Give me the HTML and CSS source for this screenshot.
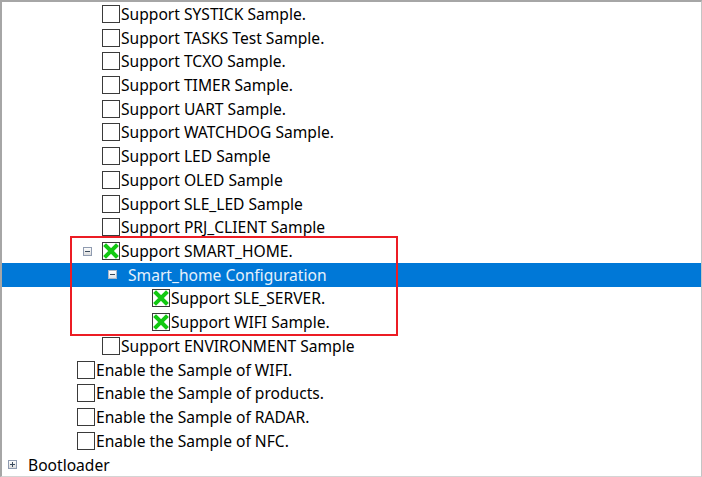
FILE: index.html
```html
<!DOCTYPE html>
<html>
<head>
<meta charset="utf-8">
<link rel="stylesheet" href="styles.css">
</head>
<body>
<div class="tree">
  <div class="row l3"><span class="exp"></span><span class="cb"></span><span class="txt">Support SYSTICK Sample.</span></div>
  <div class="row l3"><span class="exp"></span><span class="cb"></span><span class="txt">Support TASKS Test Sample.</span></div>
  <div class="row l3"><span class="exp"></span><span class="cb"></span><span class="txt">Support TCXO Sample.</span></div>
  <div class="row l3"><span class="exp"></span><span class="cb"></span><span class="txt">Support TIMER Sample.</span></div>
  <div class="row l3"><span class="exp"></span><span class="cb"></span><span class="txt">Support UART Sample.</span></div>
  <div class="row l3"><span class="exp"></span><span class="cb"></span><span class="txt">Support WATCHDOG Sample.</span></div>
  <div class="row l3"><span class="exp"></span><span class="cb"></span><span class="txt">Support LED Sample</span></div>
  <div class="row l3"><span class="exp"></span><span class="cb"></span><span class="txt">Support OLED Sample</span></div>
  <div class="row l3"><span class="exp"></span><span class="cb"></span><span class="txt">Support SLE_LED Sample</span></div>
  <div class="row l3"><span class="exp"></span><span class="cb"></span><span class="txt">Support PRJ_CLIENT Sample</span></div>
  <div class="row l3"><span class="exp"><span class="box minus"></span></span><span class="cb checked"><svg viewBox="0 0 16 16" width="16" height="16"><path d="M3 3L13 13M13 3L3 13" stroke="#12c912" stroke-width="4" stroke-linecap="square"/></svg></span><span class="txt">Support SMART_HOME.</span></div>
  <div class="row l4 sel"><span class="exp"><span class="box minus"></span></span><span class="txt">Smart_home Configuration</span></div>
  <div class="row l5"><span class="exp"></span><span class="cb checked"><svg viewBox="0 0 16 16" width="16" height="16"><path d="M3 3L13 13M13 3L3 13" stroke="#12c912" stroke-width="4" stroke-linecap="square"/></svg></span><span class="txt">Support SLE_SERVER.</span></div>
  <div class="row l5"><span class="exp"></span><span class="cb checked"><svg viewBox="0 0 16 16" width="16" height="16"><path d="M3 3L13 13M13 3L3 13" stroke="#12c912" stroke-width="4" stroke-linecap="square"/></svg></span><span class="txt">Support WIFI Sample.</span></div>
  <div class="row l3"><span class="exp"></span><span class="cb"></span><span class="txt">Support ENVIRONMENT Sample</span></div>
  <div class="row l2"><span class="exp"></span><span class="cb"></span><span class="txt">Enable the Sample of WIFI.</span></div>
  <div class="row l2"><span class="exp"></span><span class="cb"></span><span class="txt">Enable the Sample of products.</span></div>
  <div class="row l2"><span class="exp"></span><span class="cb"></span><span class="txt">Enable the Sample of RADAR.</span></div>
  <div class="row l2"><span class="exp"></span><span class="cb"></span><span class="txt">Enable the Sample of NFC.</span></div>
  <div class="row l0"><span class="exp"><span class="box plus"></span></span><span class="txt">Bootloader</span></div>
  <div class="highlight"></div>
</div>
</body>
</html>
```
FILE: styles.css
```css
* { box-sizing: border-box; }
html, body { margin: 0; padding: 0; background: #fff; }
body {
  width: 702px;
  height: 477px;
  overflow: hidden;
  font-family: "Noto Sans", "Noto Sans CJK SC", sans-serif;
  font-size: 15.6px;
  color: #000;
}
.tree {
  position: relative;
  width: 702px;
  height: 477px;
  border-top: 2px solid #a6a6a6;
  border-left: 2px solid #a6a6a6;
  border-right: 1px solid #c4c4c4;
  border-bottom: 1px solid #d4d4d4;
  overflow: hidden;
}
.row {
  display: flex;
  align-items: center;
  height: 23.72px;
  white-space: nowrap;
}
.l0 { padding-left: 0; }
.l2 { padding-left: 50px; }
.l3 { padding-left: 75px; }
.l4 { padding-left: 100px; }
.l5 { padding-left: 125px; }
.exp {
  width: 25px;
  height: 100%;
  display: flex;
  align-items: center;
  padding-left: 6px;
  flex: none;
}
.box {
  position: relative;
  width: 9px;
  height: 9px;
  border: 1px solid #8f9bb0;
  background: linear-gradient(#fdfdfd, #dcdcdc);
}
.box::before {
  content: "";
  position: absolute;
  left: 1px;
  top: 3px;
  width: 5px;
  height: 1px;
  background: #3a4a5c;
}
.box.plus::after {
  content: "";
  position: absolute;
  left: 3px;
  top: 1px;
  width: 1px;
  height: 5px;
  background: #3a4a5c;
}
.cb {
  width: 18px;
  height: 18px;
  border: 1px solid #3a3a3a;
  background: #fff;
  flex: none;
  display: flex;
  align-items: center;
  justify-content: center;
}
.txt { padding-left: 1px; }
.sel {
  background: #0078d7;
  color: #e6f1fc;
}
.sel .box { border-color: #a9b7c9; background: linear-gradient(#ffffff, #dfe3e8); }
.highlight {
  position: absolute;
  left: 68px;
  top: 234px;
  width: 328px;
  height: 100px;
  border: 2px solid #ec1c24;
  pointer-events: none;
}
```
